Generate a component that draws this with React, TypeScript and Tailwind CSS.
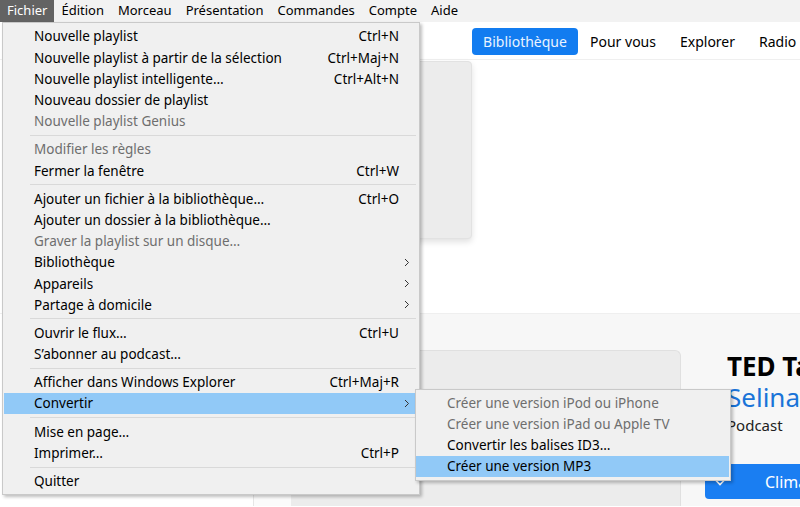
import React from 'react';

type Item =
  | { sep: true }
  | { label: string; shortcut?: string; sub?: boolean; disabled?: boolean; active?: boolean };

const menuItems: Item[] = [
  { label: 'Nouvelle playlist', shortcut: 'Ctrl+N' },
  { label: 'Nouvelle playlist à partir de la sélection', shortcut: 'Ctrl+Maj+N' },
  { label: 'Nouvelle playlist intelligente…', shortcut: 'Ctrl+Alt+N' },
  { label: 'Nouveau dossier de playlist' },
  { label: 'Nouvelle playlist Genius', disabled: true },
  { sep: true },
  { label: 'Modifier les règles', disabled: true },
  { label: 'Fermer la fenêtre', shortcut: 'Ctrl+W' },
  { sep: true },
  { label: 'Ajouter un fichier à la bibliothèque…', shortcut: 'Ctrl+O' },
  { label: 'Ajouter un dossier à la bibliothèque…' },
  { label: 'Graver la playlist sur un disque…', disabled: true },
  { label: 'Bibliothèque', sub: true },
  { label: 'Appareils', sub: true },
  { label: 'Partage à domicile', sub: true },
  { sep: true },
  { label: 'Ouvrir le flux…', shortcut: 'Ctrl+U' },
  { label: 'S’abonner au podcast…' },
  { sep: true },
  { label: 'Afficher dans Windows Explorer', shortcut: 'Ctrl+Maj+R' },
  { label: 'Convertir', sub: true, active: true },
  { sep: true },
  { label: 'Mise en page…' },
  { label: 'Imprimer…', shortcut: 'Ctrl+P' },
  { sep: true },
  { label: 'Quitter' },
];

const subItems = [
  { label: 'Créer une version iPod ou iPhone', disabled: true },
  { label: 'Créer une version iPad ou Apple TV', disabled: true },
  { label: 'Convertir les balises ID3…' },
  { label: 'Créer une version MP3', active: true },
];

const menuBar = ['Fichier', 'Édition', 'Morceau', 'Présentation', 'Commandes', 'Compte', 'Aide'];

const Chevron = () => (
  <svg width="6" height="9" viewBox="0 0 6 9" fill="none" stroke="#333" strokeWidth="1">
    <path d="M1 1l3.5 3.5L1 8" />
  </svg>
);

const FileMenu = () => (
  <div className="absolute left-[2px] top-[22px] w-[418px] bg-[#f0f0f0] border border-[#c9c9c9] pt-[3px] pb-[2px] shadow-[2px_2px_3px_rgba(0,0,0,0.25)]">
    {menuItems.map((it, i) =>
      'sep' in it ? (
        <div key={i} className="h-px bg-[#d9d9d9] ml-[27px] mr-[3px] my-[3px]" />
      ) : (
        <div
          key={i}
          className={`h-[21.2px] flex items-center ml-[1px] mr-[4px] pl-[30px] ${
            it.active ? 'bg-[#91c9f7]' : ''
          } ${it.disabled ? 'text-[#6e6e6e]' : 'text-black'}`}
        >
          <span className="flex-1 whitespace-nowrap">{it.label}</span>
          {it.shortcut && <span className="whitespace-nowrap">{it.shortcut}</span>}
          <span className="w-[16px] flex justify-center">{it.sub && <Chevron />}</span>
        </div>
      )
    )}
  </div>
);

const ConvertMenu = () => (
  <div className="absolute left-[415px] top-[389px] w-[316px] bg-[#f0f0f0] border border-[#c9c9c9] pt-[2px] pb-[3px] shadow-[2px_2px_3px_rgba(0,0,0,0.25)]">
    {subItems.map((it, i) => (
      <div
        key={i}
        className={`h-[21.3px] flex items-center mr-[1px] pl-[31px] whitespace-nowrap ${
          it.active ? 'bg-[#91c9f7]' : ''
        } ${it.disabled ? 'text-[#6e6e6e]' : 'text-black'}`}
      >
        {it.label}
      </div>
    ))}
  </div>
);

export default function App() {
  return (
    <div className="relative w-[800px] h-[507px] overflow-hidden bg-white text-[13.5px] font-['Noto_Sans',sans-serif]">
      <div className="h-[22px] flex items-stretch bg-[#f2f2f2] text-[13px]">
        {menuBar.map((m, i) => (
          <div
            key={m}
            className={`px-[7px] flex items-center ${i === 0 ? 'bg-[#636363] text-white' : 'text-black'}`}
          >
            {m}
          </div>
        ))}
      </div>

      <div className="h-[38px] flex items-center pl-[472px] pt-[2px] border-b border-[#efefef] text-[14px] whitespace-nowrap">
        <div className="w-[106px] h-[27px] flex items-center justify-center rounded-[4px] bg-[#127cf0] text-[#eaf3ff]">
          Bibliothèque
        </div>
        <div className="ml-[12px] text-black">Pour vous</div>
        <div className="ml-[24px] text-black">Explorer</div>
        <div className="ml-[24px] text-black">Radio</div>
      </div>

      <div className="h-[253px] pt-[1px]">
        <div className="ml-[250px] w-[222px] h-[178px] bg-[#ececec] rounded-r-[4px] border border-[#e2e2e2] shadow-[0_3px_6px_rgba(0,0,0,0.12)]" />
      </div>

      <div className="h-[193px] flex border-t border-[#efefef]">
        <div className="w-[253px] shrink-0 bg-white" />
        <div className="w-[38px] shrink-0 bg-[#fbfbfb] border-l border-[#e6e6e6]" />
        <div className="flex-1 min-w-0 bg-[#f7f7f7] flex pt-[36px]">
          <div className="w-[390px] shrink-0 bg-[#ececec] rounded-tr-[6px] border-t border-r border-[#e0e0e0]" />
          <div className="ml-[24px] flex-1 min-w-0 overflow-hidden">
            <div className="pl-[22px] whitespace-nowrap">
              <div className="text-[26px] font-bold leading-[32px] text-black">TED Talks Daily</div>
              <div className="text-[26px] leading-[30px] text-[#1a74d8]">Selina Ray</div>
              <div className="text-[15px] leading-[26px] text-[#222]">Podcast</div>
            </div>
            <div className="mt-[26px] h-[35px] rounded-l-[4px] bg-[#1a7ef2] flex items-center pl-[8px] text-white text-[16px] whitespace-nowrap">
              <svg width="14" height="14" viewBox="0 0 14 14" fill="none" stroke="white" strokeWidth="1.6" className="shrink-0">
                <path d="M3 5.5l4 4 4-4" />
              </svg>
              <span className="ml-[38px]">Climat</span>
            </div>
          </div>
        </div>
      </div>

      <FileMenu />
      <ConvertMenu />
    </div>
  );
}
